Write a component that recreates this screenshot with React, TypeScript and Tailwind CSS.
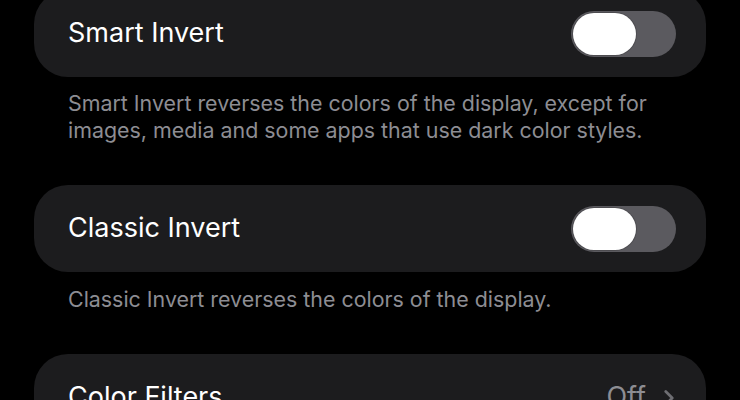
import { ChevronRight } from "lucide-react";

const FONT = { fontFamily: "Inter, 'Noto Sans', sans-serif" };

function Toggle() {
  return (
    <div className="w-[105px] h-[46px] rounded-full bg-[#5b5a5f] p-[2px] flex items-center">
      <div className="w-[63px] h-[42px] rounded-full bg-white shadow-[0_0_0_1px_rgba(0,0,0,0.15)]" />
    </div>
  );
}

function ToggleRow({ label }: { label: string }) {
  return (
    <div className="h-[87px] rounded-[34px] bg-[#1c1c1e] flex items-center justify-between pl-[34px] pr-[30px]">
      <span className="text-[27px] text-white">{label}</span>
      <Toggle />
    </div>
  );
}

export default function App() {
  return (
    <div className="h-[400px] w-[740px] overflow-hidden bg-black" style={FONT}>
      <div className="flex flex-col px-[34px] -mt-[10px]">
        <ToggleRow label="Smart Invert" />
        <p className="px-[34px] pt-[13px] pb-[41px] text-[21.4px] leading-[27px] text-[#8d8d93] whitespace-nowrap">
          Smart Invert reverses the colors of the display, except for
          <br />
          images, media and some apps that use dark color styles.
        </p>

        <ToggleRow label="Classic Invert" />
        <p className="px-[34px] pt-[14px] pb-[41px] text-[21.4px] leading-[27px] text-[#8d8d93] whitespace-nowrap">
          Classic Invert reverses the colors of the display.
        </p>

        <div className="h-[87px] rounded-[34px] bg-[#1c1c1e] flex items-center justify-between pl-[34px] pr-[24px]">
          <span className="text-[27px] text-white">Color Filters</span>
          <div className="flex items-center gap-[10px]">
            <span className="text-[27px] text-[#8d8d93]">Off</span>
            <ChevronRight className="w-[26px] h-[26px] text-[#6e6e73]" strokeWidth={2.5} />
          </div>
        </div>
      </div>
    </div>
  );
}
